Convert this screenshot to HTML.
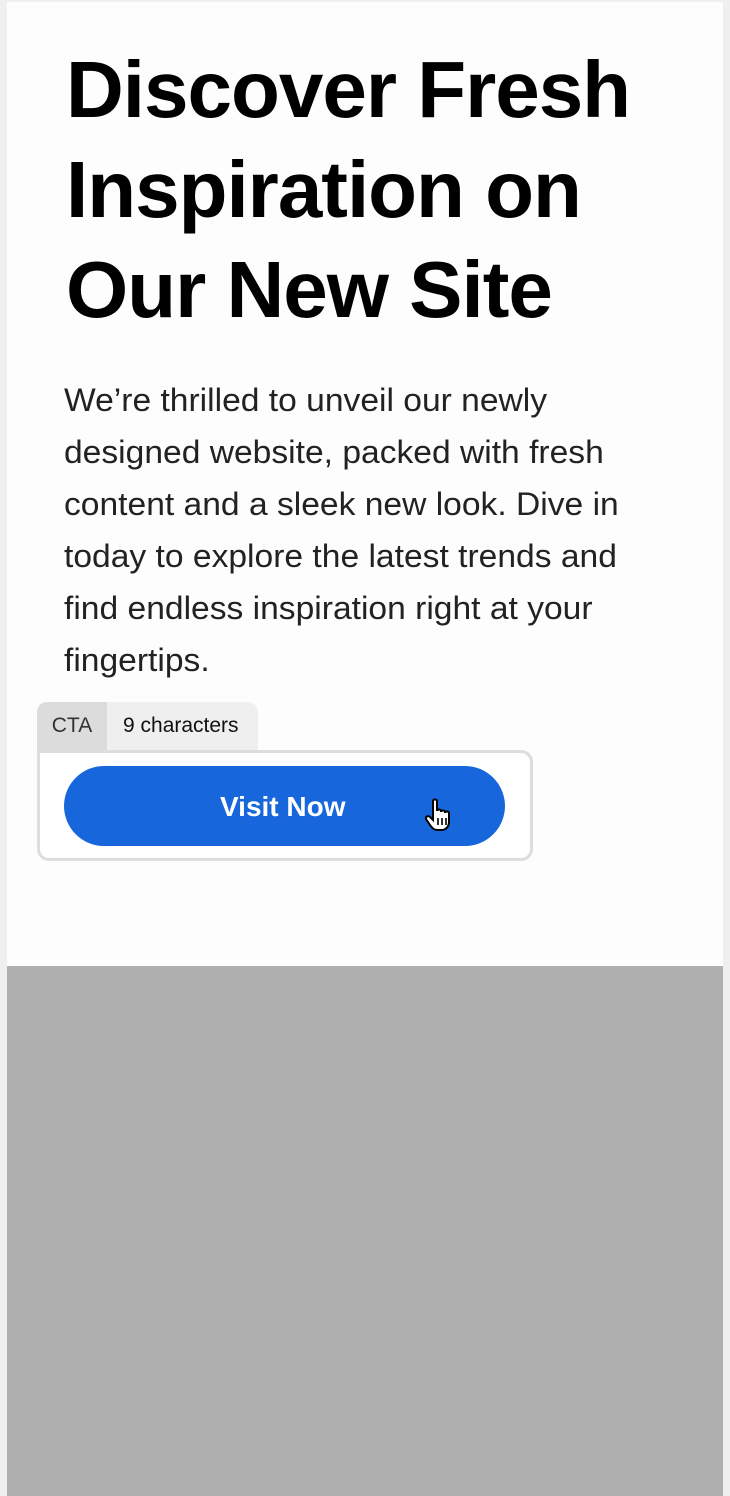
<!DOCTYPE html>
<html><head><style>
html,body{margin:0;padding:0;}
body{width:730px;height:1496px;background:#efefef;position:relative;overflow:hidden;font-family:"Liberation Sans",sans-serif;}
.page{position:absolute;left:7px;top:2px;width:716px;height:1494px;background:#fdfdfd;}
.gray{position:absolute;left:7px;top:966px;width:716px;height:530px;background:#afafaf;}
h1{position:absolute;left:66px;top:40px;margin:0;font-size:80px;line-height:100px;font-weight:bold;letter-spacing:-1px;color:#000;white-space:nowrap;}
.p{position:absolute;left:64px;top:374px;font-size:32px;line-height:52px;color:#222;white-space:nowrap;}
.p div{transform:scaleX(1.05);transform-origin:left;}
.tag{position:absolute;left:37px;top:702px;height:48px;width:221px;background:#efefef;border-radius:10px 10px 0 0;overflow:hidden;font-size:21px;line-height:48px;color:#111;}
.tag .a{position:absolute;left:0;top:0;width:70px;height:48px;background:#dcdcdc;text-align:center;color:#333;}
.tag .b{position:absolute;left:86px;top:0;}
.box{position:absolute;left:37px;top:750px;width:490px;height:105px;border:3px solid #dddddd;border-radius:0 12px 12px 12px;background:#fff;}
.btn{position:absolute;left:64px;top:766px;width:441px;height:80px;border-radius:40px;background:#1766db;color:#fff;font-weight:bold;font-size:28px;line-height:82px;text-align:center;}
.btn span{position:absolute;left:156px;}
</style></head><body>
<div class="page"></div>
<div class="gray"></div>
<h1>Discover Fresh<br>Inspiration on<br>Our New Site</h1>
<div class="p">
<div>We’re thrilled to unveil our newly</div>
<div>designed website, packed with fresh</div>
<div>content and a sleek new look. Dive in</div>
<div>today to explore the latest trends and</div>
<div>find endless inspiration right at your</div>
<div>fingertips.</div>
</div>
<div class="box"></div>
<div class="tag"><div class="a">CTA</div><div class="b">9 characters</div></div>
<div class="btn"><span>Visit Now</span>
<svg style="position:absolute;left:361px;top:32px" width="30" height="34" viewBox="0 0 30 34"><path d="M8 3c0-2 4-2 4 0v10c0-2 4-2 4 0v1c0-2 4-2 4 0v1c0-2 4-2 4 0v9c0 4-3 8-7 8h-5c-3 0-5-2-7-5l-4-6c-1-2 2-4 4-2l3 3z" fill="#fff" stroke="#000" stroke-width="2"/><path d="M13 20v7M17 20v7M21 20v7" stroke="#000" stroke-width="1.6"/></svg>
</div>
</body></html>
